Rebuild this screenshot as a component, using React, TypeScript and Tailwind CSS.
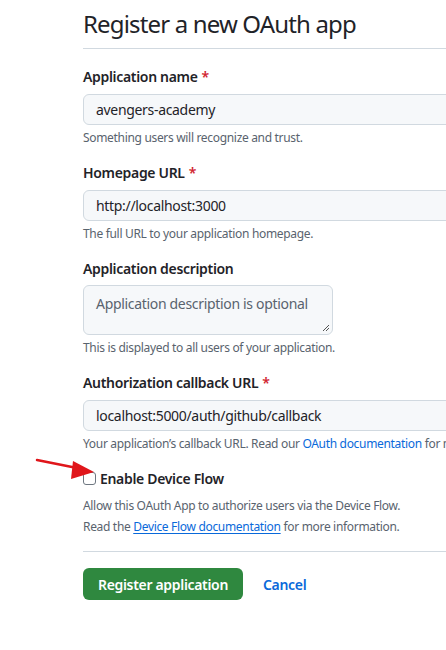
const Req = () => <span className="text-[#d1242f] ml-1">*</span>

const Field = ({ label, value, hint, required }: { label: string; value: string; hint: React.ReactNode; required?: boolean }) => (
  <div className="mb-[15px]">
    <label className="block text-[14px] leading-[21px] font-semibold text-[#1f2328]">
      {label}
      {required && <Req />}
    </label>
    <div className="mt-[7px] h-[31px] w-[440px] rounded-md border border-[#d1d9e0] bg-[#f6f8fa] px-3 flex items-center text-[14px] text-[#1f2328]">
      {value}
    </div>
    <p className="mt-[4px] text-[12px] leading-[18px] text-[#59636e] whitespace-nowrap">{hint}</p>
  </div>
)

export default function App() {
  return (
    <div
      className="w-[446px] h-[650px] overflow-hidden bg-white tracking-[-0.02em]"
      style={{ fontFamily: '"Noto Sans", "Liberation Sans", sans-serif' }}
    >
      <div className="pl-[83px] w-[900px]">
        <h2 className="pt-[6px] pb-[6px] text-[24px] leading-[36px] tracking-[-0.035em] text-[#1f2328] border-b border-[#d1d9e0]">
          Register a new OAuth app
        </h2>

        <div className="mt-[17px]">
          <Field label="Application name" required value="avengers-academy" hint="Something users will recognize and trust." />
          <Field label="Homepage URL" required value="http://localhost:3000" hint="The full URL to your application homepage." />

          <div className="mb-[15px]">
            <label className="block text-[14px] leading-[21px] font-semibold text-[#1f2328]">Application description</label>
            <div className="relative mt-[6px] h-[50px] w-[250px] rounded-md border border-[#d1d9e0] bg-[#f6f8fa] px-3 pt-[7px] text-[14px] text-[#59636e]">
              Application description is optional
              <svg className="absolute right-[2px] bottom-[2px]" width="8" height="8" viewBox="0 0 8 8">
                <path d="M7 1L1 7M7 4L4 7" stroke="#555" strokeWidth="1" />
              </svg>
            </div>
            <p className="mt-[4px] text-[12px] leading-[18px] text-[#59636e]">This is displayed to all users of your application.</p>
          </div>

          <Field
            label="Authorization callback URL"
            required
            value="localhost:5000/auth/github/callback"
            hint={
              <>
                Your application’s callback URL. Read our <a href="#" className="text-[#0969da]">OAuth documentation</a> for more information.
              </>
            }
          />

          <div className="relative mt-[15px]">
            <svg className="absolute left-[-48px] top-[-10px]" width="60" height="30" viewBox="0 0 60 30">
              <line x1="2" y1="2" x2="42" y2="10" stroke="#e0161b" strokeWidth="2.5" strokeLinecap="round" />
              <polygon points="38,3 59,14 36,21" fill="#e0161b" />
            </svg>
            <label className="flex items-center gap-[4px] text-[14px] leading-[21px] font-semibold text-[#1f2328]">
              <span className="inline-block w-[13px] h-[13px] rounded-[3px] border border-[#6e7781] bg-white" />
              Enable Device Flow
            </label>
            <p className="mt-[8px] text-[12px] leading-[18px] text-[#59636e]">Allow this OAuth App to authorize users via the Device Flow.</p>
            <p className="mt-[3px] text-[12px] leading-[18px] text-[#59636e]">
              Read the <a href="#" className="text-[#0969da] underline underline-offset-2">Device Flow documentation</a> for more information.
            </p>
          </div>
        </div>

        <div className="mt-[15px] border-t border-[#d1d9e0] pt-[16px] flex items-center gap-[20px]">
          <button className="h-[32px] w-[160px] rounded-md bg-[#2f883f] text-white text-[14px] font-semibold">Register application</button>
          <a href="#" className="text-[14px] font-semibold text-[#0969da]">Cancel</a>
        </div>
      </div>
    </div>
  )
}
